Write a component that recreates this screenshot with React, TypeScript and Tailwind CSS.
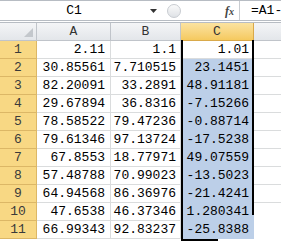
import React from "react";

const colA = ["2.11", "30.85561", "82.20091", "29.67894", "78.58522", "79.61346", "67.8553", "57.48788", "64.94568", "47.6538", "66.99343"];
const colB = ["1.1", "7.710515", "33.2891", "36.8316", "79.47236", "97.13724", "18.77971", "70.99023", "86.36976", "46.37346", "92.83237"];
const colC = ["1.01", "23.1451", "48.91181", "-7.15266", "-0.88714", "-17.5238", "49.07559", "-13.5023", "-21.4241", "1.280341", "-25.8388"];

const mono = { fontFamily: '"Liberation Mono", "DejaVu Sans Mono", monospace' };

export default function App() {
  return (
    <div className="relative w-[281px] h-[241px] overflow-hidden bg-white text-[13px] text-black" style={mono}>
      {/* formula bar */}
      <div className="flex h-[21px] items-center border-t border-b border-[#b7bcc3] bg-white">
        <div className="flex w-[148px] h-full items-center justify-center pt-[1px]">C1</div>
        <svg width="7" height="4" viewBox="0 0 7 4" className="ml-[2px]">
          <path d="M0 0h7L3.5 4z" fill="#333" />
        </svg>
        <div className="ml-[10px] h-[14px] w-[14px] rounded-full border border-[#c8ccd1] bg-gradient-to-b from-[#fafafa] to-[#dfe2e6]" />
        <div className="flex-1" />
        <span className="mr-[5px] italic font-bold text-[12px] text-[#444]" style={{ fontFamily: '"Liberation Serif", serif' }}>
          f<span className="text-[10px]">x</span>
        </span>
        <div className="h-full w-px bg-[#c8ccd1]" />
        <div className="w-[41px] pl-[11px] pt-[1px]">=A1-</div>
      </div>

      <div className="h-[1px]" />

      {/* sheet */}
      <div className="grid grid-cols-[37px_74px_70px_73px_1fr] grid-rows-[18px_repeat(11,18px)] border-t border-[#b7bcc3]">
        {/* header row */}
        <div className="relative border-r border-b border-[#c0c4ca] bg-gradient-to-b from-[#f4f5f7] to-[#e3e6ea]">
          <svg width="9" height="9" viewBox="0 0 9 9" className="absolute right-[3px] bottom-[3px]">
            <path d="M9 0v9H0z" fill="#c3c7cc" />
          </svg>
        </div>
        <div className="flex items-center justify-center border-r border-b border-[#c0c4ca] bg-gradient-to-b from-[#f4f5f7] to-[#e3e6ea] text-[#333]">A</div>
        <div className="flex items-center justify-center border-r border-b border-[#c0c4ca] bg-gradient-to-b from-[#f4f5f7] to-[#e3e6ea] text-[#333]">B</div>
        <div className="flex items-center justify-center border-r border-b border-[#d9a94a] bg-gradient-to-b from-[#fbe3a0] to-[#f5c95e] text-[#333]">C</div>
        <div className="border-b border-[#c0c4ca] bg-gradient-to-b from-[#f4f5f7] to-[#e3e6ea]" />

        {colA.map((a, i) => {
          const last = i >= 9;
          return (
            <React.Fragment key={i}>
              <div className="flex items-center justify-center border-r border-b border-[#dcb766] bg-[#f8d884] text-[#3a3a3a]">{i + 1}</div>
              <div className="flex items-center justify-end pr-[5px] border-r border-b border-[#dadcdd]">{a}</div>
              <div className="flex items-center justify-end pr-[4px] border-r border-b border-[#dadcdd]">{colB[i]}</div>
              <div className={`flex items-center justify-end pr-[5px] border-b ${i === 0 ? "bg-white border-[#dadcdd]" : "bg-[#bccfe8] border-[#bccfe8]"}`}>{colC[i]}</div>
              <div className={last ? "" : "border-b border-[#dadcdd]"} />
            </React.Fragment>
          );
        })}
      </div>

      {/* selection outline */}
      <div className="absolute left-[181px] top-[40px] h-[201px] w-[2px] bg-black" />
      <div className="absolute left-[252px] top-[40px] h-[175px] w-[2px] bg-black" />
      <div className="absolute left-[181px] top-[239px] h-[2px] w-[37px] bg-black" />
    </div>
  );
}
